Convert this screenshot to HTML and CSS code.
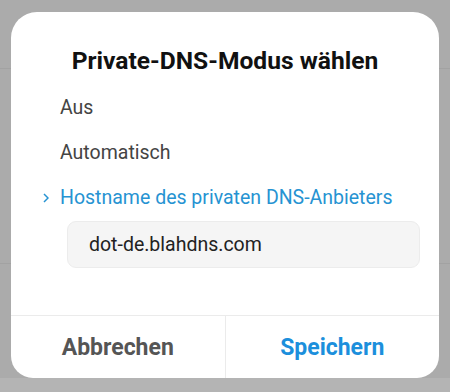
FILE: index.html
```html
<!DOCTYPE html>
<html lang="de">
  <head>
    <meta charset="UTF-8" />
    <meta name="viewport" content="width=device-width, initial-scale=1.0" />
    <title>Private-DNS-Modus</title>
    <link rel="stylesheet" href="styles.css">
  </head>
  <body>
    <main class="dialog">
      <h1>Private-DNS-Modus wählen</h1>
      <ul class="opcoes">
        <li class="opcao">Aus</li>
        <li class="opcao">Automatisch</li>
        <li class="opcao ativa">
          <svg class="seta" width="6" height="10" viewBox="0 0 6 10">
            <path d="M1 1 L5 5 L1 9" fill="none" stroke="currentColor" stroke-width="1.5" />
          </svg>
          Hostname des privaten DNS-Anbieters
        </li>
      </ul>
      <div class="campo">dot-de.blahdns.com</div>
      <div class="botoes">
        <button class="btn" id="cancelar">Abbrechen</button>
        <button class="btn" id="salvar">Speichern</button>
      </div>
    </main>
  </body>
</html>
```

FILE: styles.css
```css
* {
  margin: 0;
  padding: 0;
  box-sizing: border-box;
  font-family: Roboto, "Noto Sans", sans-serif;
}

body {
  height: 392px;
  padding: 12px 11px 0;
  background-color: #ababab;
  background-image:
    linear-gradient(#a2a2a2, #a2a2a2),
    linear-gradient(#a2a2a2, #a2a2a2),
    linear-gradient(#b4b4b4, #b4b4b4);
  background-size: 100% 1px, 100% 1px, 100% 14px;
  background-position: 0 68px, 0 263px, 0 378px;
  background-repeat: no-repeat;
}

.dialog {
  display: flex;
  flex-direction: column;
  width: 428px;
  height: 366px;
  background-color: #fff;
  border-radius: 26px 26px 22px 22px;
  overflow: hidden;
}

h1 {
  margin-top: 35px;
  font-size: 24.6px;
  line-height: 28px;
  font-weight: bold;
  text-align: center;
  color: #111;
}

.opcoes {
  list-style: none;
  margin-top: 10px;
}

.opcao {
  position: relative;
  height: 45px;
  padding-left: 49px;
  font-size: 19.5px;
  line-height: 45px;
  color: #444;
}

.ativa {
  color: #2693d2;
}

.seta {
  position: absolute;
  left: 32px;
  top: 18px;
}

.campo {
  margin: 1px 0 0 56px;
  width: 353px;
  height: 47px;
  padding-left: 21px;
  font-size: 19.5px;
  line-height: 46px;
  color: #222;
  background-color: #f5f5f5;
  border: 1px solid #ececec;
  border-radius: 9px;
}

.botoes {
  display: flex;
  margin-top: auto;
  height: 63px;
  border-top: 1px solid #ebebeb;
}

.btn {
  flex: 1;
  border: none;
  background: none;
  font-size: 23px;
  font-weight: bold;
  cursor: pointer;
}

#cancelar {
  color: #555;
  border-right: 1px solid #ebebeb;
}

#salvar {
  color: #1c8fdc;
}
```
